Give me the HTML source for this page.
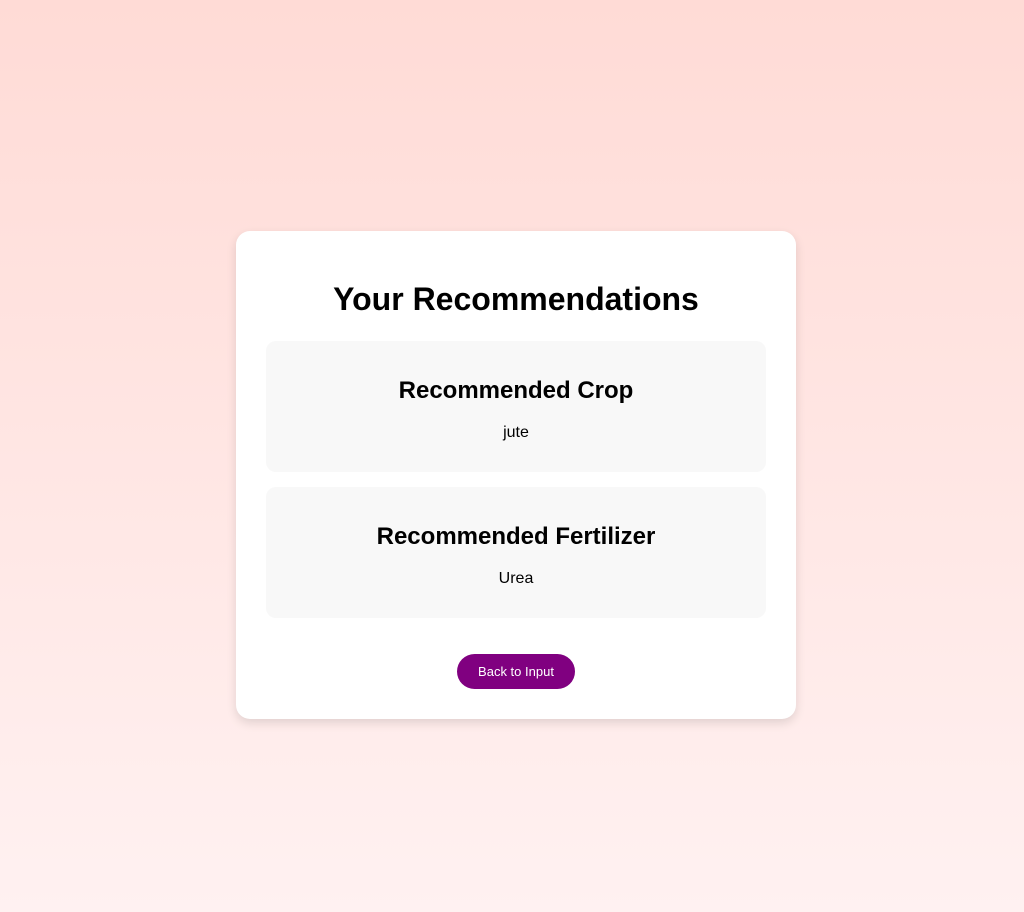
<!DOCTYPE html>
<html><head><style>
html,body{margin:0;height:912px;}
body{background:linear-gradient(to bottom,#ffdbd6,#fff1f1);font-family:"Liberation Sans",sans-serif;position:relative;}
.card{position:absolute;left:236px;top:231px;width:560px;height:488px;background:#fff;border-radius:14px;box-shadow:0 4px 10px rgba(0,0,0,0.12);box-sizing:border-box;text-align:center;}
.title{position:absolute;left:0;right:0;top:50px;font-size:32px;font-weight:bold;color:#000;}
.box{position:absolute;left:30px;width:500px;height:131px;background:#f8f8f8;border-radius:10px;}
.box h2{margin:0;position:absolute;left:0;right:0;top:36px;font-size:24px;}
.box p{margin:0;position:absolute;left:0;right:0;top:83px;font-size:16px;}
.btn{position:absolute;left:221px;top:423px;width:118px;height:35px;background:#800080;color:#fff;border-radius:18px;font-size:13px;line-height:35px;}
</style></head><body>
<div class="card">
<div class="title">Your Recommendations</div>
<div class="box" style="top:110px"><h2>Recommended Crop</h2><p>jute</p></div>
<div class="box" style="top:256px"><h2>Recommended Fertilizer</h2><p>Urea</p></div>
<div class="btn">Back to Input</div>
</div>
</body></html>
